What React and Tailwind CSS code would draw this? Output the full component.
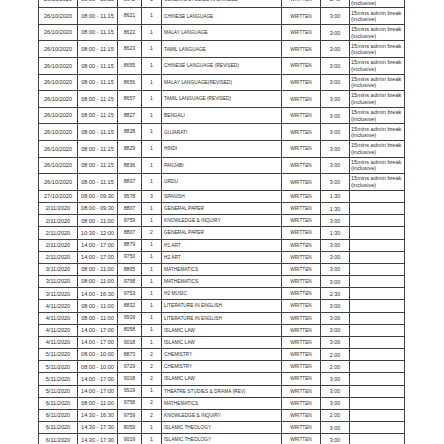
import React from "react";

const top = [
  ["26/10/2020", "08:00 - 10:55", "8642", "1", "GENERAL STUDIES IN CHINESE", "WRITTEN", "2:40"],
  ["26/10/2020", "08:00 - 11:15", "8621", "1", "CHINESE LANGUAGE", "WRITTEN", "3:00"],
  ["26/10/2020", "08:00 - 11:15", "8622", "1", "MALAY LANGUAGE", "WRITTEN", "3:00"],
  ["26/10/2020", "08:00 - 11:15", "8623", "1", "TAMIL LANGUAGE", "WRITTEN", "3:00"],
  ["26/10/2020", "08:00 - 11:15", "8655", "1", "CHINESE LANGUAGE (REVISED)", "WRITTEN", "3:00"],
  ["26/10/2020", "08:00 - 11:15", "8656", "1", "MALAY LANGUAGE(REVISED)", "WRITTEN", "3:00"],
  ["26/10/2020", "08:00 - 11:15", "8657", "1", "TAMIL LANGUAGE (REVISED)", "WRITTEN", "3:00"],
  ["26/10/2020", "08:00 - 11:15", "8827", "1", "BENGALI", "WRITTEN", "3:00"],
  ["26/10/2020", "08:00 - 11:15", "8828", "1", "GUJARATI", "WRITTEN", "3:00"],
  ["26/10/2020", "08:00 - 11:15", "8829", "1", "HINDI", "WRITTEN", "3:00"],
  ["26/10/2020", "08:00 - 11:15", "8836", "1", "PANJABI", "WRITTEN", "3:00"],
  ["26/10/2020", "08:00 - 11:15", "8837", "1", "URDU", "WRITTEN", "3:00"],
];

const bottom = [
  ["27/10/2020", "08:00 - 09:30", "9578", "3", "SPANISH", "WRITTEN", "1:30"],
  ["2/11/2020", "08:00 - 09:30", "8807", "1", "GENERAL PAPER", "WRITTEN", "1:30"],
  ["2/11/2020", "08:00 - 11:00", "9759", "1", "KNOWLEDGE & INQUIRY", "WRITTEN", "3:00"],
  ["2/11/2020", "10:30 - 12:00", "8807", "2", "GENERAL PAPER", "WRITTEN", "1:30"],
  ["2/11/2020", "14:00 - 17:00", "8879", "1", "H1 ART", "WRITTEN", "3:00"],
  ["2/11/2020", "14:00 - 17:00", "9750", "1", "H2 ART", "WRITTEN", "3:00"],
  ["3/11/2020", "08:00 - 11:00", "8865", "1", "MATHEMATICS", "WRITTEN", "3:00"],
  ["3/11/2020", "08:00 - 11:00", "9758", "1", "MATHEMATICS", "WRITTEN", "3:00"],
  ["3/11/2020", "14:00 - 16:30", "9753", "1", "H2 MUSIC", "WRITTEN", "2:30"],
  ["4/11/2020", "08:00 - 11:00", "8832", "1", "LITERATURE IN ENGLISH", "WRITTEN", "3:00"],
  ["4/11/2020", "08:00 - 11:00", "9509", "1", "LITERATURE IN ENGLISH", "WRITTEN", "3:00"],
  ["4/11/2020", "14:00 - 17:00", "8058", "1", "ISLAMIC LAW", "WRITTEN", "3:00"],
  ["4/11/2020", "14:00 - 17:00", "9018", "1", "ISLAMIC LAW", "WRITTEN", "3:00"],
  ["5/11/2020", "08:00 - 10:00", "8873", "2", "CHEMISTRY", "WRITTEN", "2:00"],
  ["5/11/2020", "08:00 - 10:00", "9729", "2", "CHEMISTRY", "WRITTEN", "2:00"],
  ["5/11/2020", "14:00 - 17:00", "9018", "2", "ISLAMIC LAW", "WRITTEN", "3:00"],
  ["5/11/2020", "14:00 - 17:00", "9519", "1", "THEATRE STUDIES & DRAMA (REV)", "WRITTEN", "3:00"],
  ["6/11/2020", "08:00 - 11:00", "9758", "2", "MATHEMATICS", "WRITTEN", "3:00"],
  ["6/11/2020", "14:30 - 16:30", "9759", "2", "KNOWLEDGE & INQUIRY", "WRITTEN", "2:00"],
  ["6/11/2020", "14:30 - 17:30", "8059", "1", "ISLAMIC THEOLOGY", "WRITTEN", "3:00"],
  ["6/11/2020", "14:30 - 17:30", "9019", "1", "ISLAMIC THEOLOGY", "WRITTEN", "3:00"],
];

const cell = "border-r border-b border-[#404040] flex items-center overflow-hidden whitespace-nowrap";
const c = cell + " justify-center";

function Row({ r, tall }) {
  return (
    <div
      className={
        "grid grid-cols-[40px_40px_24px_20px_120px_39px_29px_55px] " +
        (tall ? "h-[16.6px]" : "h-[12.18px]")
      }
    >
      <div className={c + " border-l text-[5.6px]"}>{r[0]}</div>
      <div className={c + " text-[5.6px]"}>{r[1]}</div>
      <div className={c + " text-[5.2px]"}>{r[2]}</div>
      <div className={c + " text-[5.2px]"}>{r[3]}</div>
      <div className={cell + " pl-[2px] text-[4.8px]"}>{r[4]}</div>
      <div className={c + " text-[4.7px]"}>{r[5]}</div>
      <div className={c + " text-[5.4px]"}>{r[6]}</div>
      <div className={cell + " pl-[1px] text-[5.6px]"}>
        {tall ? (
          <div className="leading-[6.6px]">
            <div>15mins admin break</div>
            <div>(inclusive)</div>
          </div>
        ) : null}
      </div>
    </div>
  );
}

export default function App() {
  return (
    <div
      className="w-[444px] h-[444px] overflow-hidden bg-white text-[#2e2e2e]"
      style={{ fontFamily: '"Liberation Sans", Arial, sans-serif' }}
    >
      <div className="ml-[38px] -mt-[8.3px] w-[367px]">
        {top.map((r, i) => (
          <Row key={"t" + i} r={r} tall />
        ))}
        {bottom.map((r, i) => (
          <Row key={"b" + i} r={r} />
        ))}
      </div>
    </div>
  );
}
